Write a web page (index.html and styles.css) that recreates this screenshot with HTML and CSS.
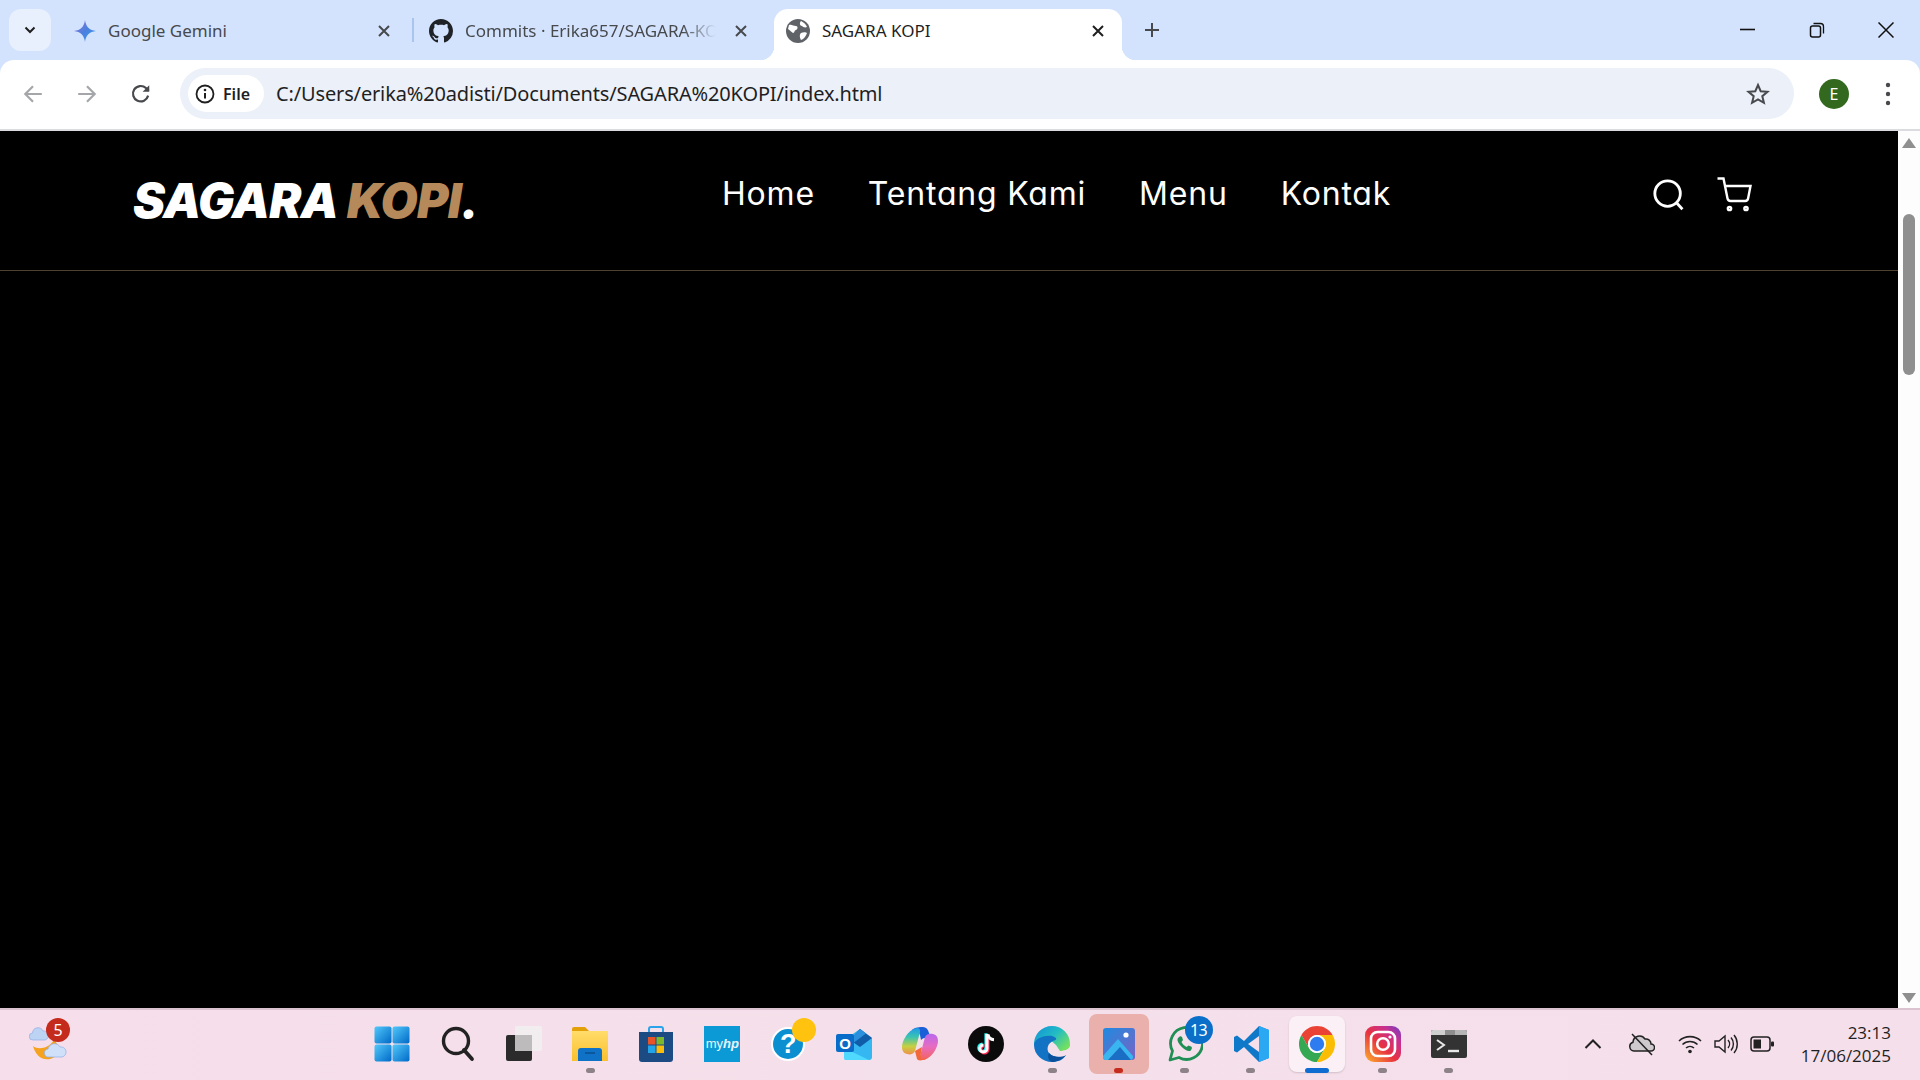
FILE: index.html
```html
<!DOCTYPE html>
<html lang="en">
<head>
    <meta charset="UTF-8">
    <title>SAGARA KOPI</title>
    <link rel="stylesheet" href="styles.css">
</head>
<body>
    <svg class="defs" width="0" height="0">
        <defs>
            <linearGradient id="gemGrad" x1="0" y1="0" x2="1" y2="1">
                <stop offset="0" stop-color="#9b72cb"/>
                <stop offset="0.5" stop-color="#4a80e0"/>
                <stop offset="1" stop-color="#3aa0e8"/>
            </linearGradient>
            <linearGradient id="winGrad" x1="0" y1="0" x2="1" y2="1">
                <stop offset="0" stop-color="#52c8fa"/>
                <stop offset="1" stop-color="#0069c8"/>
            </linearGradient>
            <linearGradient id="folderGrad" x1="0" y1="0" x2="0" y2="1">
                <stop offset="0" stop-color="#ffdc6b"/>
                <stop offset="1" stop-color="#fbc02d"/>
            </linearGradient>
            <linearGradient id="edgeGrad" x1="0" y1="0" x2="1" y2="0.7">
                <stop offset="0" stop-color="#0f8fd8"/>
                <stop offset="0.55" stop-color="#22bcc4"/>
                <stop offset="1" stop-color="#74e060"/>
            </linearGradient>
            <linearGradient id="instaGrad" x1="0" y1="1" x2="1" y2="0">
                <stop offset="0" stop-color="#fdb32b"/>
                <stop offset="0.45" stop-color="#e8323f"/>
                <stop offset="0.75" stop-color="#c9308f"/>
                <stop offset="1" stop-color="#6a3fc8"/>
            </linearGradient>
            <linearGradient id="copGrad" x1="0" y1="0" x2="0" y2="1">
                <stop offset="0" stop-color="#1e9be8"/>
                <stop offset="0.35" stop-color="#3cc4b0"/>
                <stop offset="0.7" stop-color="#c8d040"/>
                <stop offset="1" stop-color="#f09048"/>
            </linearGradient>
            <linearGradient id="copGrad2" x1="0" y1="0" x2="0" y2="1">
                <stop offset="0" stop-color="#b868ee"/>
                <stop offset="0.5" stop-color="#e86cc0"/>
                <stop offset="1" stop-color="#f4625a"/>
            </linearGradient>
            <linearGradient id="photoGrad" x1="0" y1="0" x2="1" y2="1">
                <stop offset="0" stop-color="#1f8ae0"/>
                <stop offset="1" stop-color="#7a63c4"/>
            </linearGradient>
        </defs>
    </svg>

    <div class="tabstrip">
        <button class="tab-search">
            <svg width="12" height="8" viewBox="0 0 12 8"><path d="M1.5 1.5 6 6l4.5-4.5" fill="none" stroke="#1f1f1f" stroke-width="2"/></svg>
        </button>

        <div class="tab tab-first">
            <svg class="tab-icon" viewBox="0 0 24 24"><path d="M12 1C12.7 7.5 16.5 11.3 23 12 16.5 12.7 12.7 16.5 12 23 11.3 16.5 7.5 12.7 1 12 7.5 11.3 11.3 7.5 12 1Z" fill="url(#gemGrad)"/></svg>
            <span class="tab-title">Google Gemini</span>
            <svg class="tab-close" viewBox="0 0 12 12"><path d="M1 1l10 10M11 1 1 11" stroke="#47494d" stroke-width="2"/></svg>
        </div>
        <div class="tab-sep"></div>
        <div class="tab tab-second">
            <svg class="tab-icon" viewBox="0 0 16 16"><path fill="#1f2328" d="M8 0C3.58 0 0 3.58 0 8c0 3.54 2.29 6.53 5.47 7.59.4.07.55-.17.55-.38 0-.19-.01-.82-.01-1.49-2.01.37-2.53-.49-2.69-.94-.09-.23-.48-.94-.82-1.13-.28-.15-.68-.52-.01-.53.63-.01 1.08.58 1.23.82.72 1.21 1.87.87 2.33.66.07-.52.28-.87.51-1.07-1.78-.2-3.64-.89-3.64-3.95 0-.87.31-1.59.82-2.15-.08-.2-.36-1.02.08-2.12 0 0 .67-.21 2.2.82.64-.18 1.32-.27 2-.27.68 0 1.36.09 2 .27 1.53-1.04 2.2-.82 2.2-.82.44 1.1.16 1.92.08 2.12.51.56.82 1.27.82 2.15 0 3.07-1.87 3.75-3.65 3.95.29.25.54.73.54 1.48 0 1.07-.01 1.93-.01 2.2 0 .21.15.46.55.38A8.013 8.013 0 0016 8c0-4.42-3.58-8-8-8z"/></svg>
            <span class="tab-title tab-fade">Commits · Erika657/SAGARA-KOPI</span>
            <svg class="tab-close" viewBox="0 0 12 12"><path d="M1 1l10 10M11 1 1 11" stroke="#47494d" stroke-width="2"/></svg>
        </div>
        <div class="tab tab-active">
            <svg class="tab-icon" viewBox="0 0 24 24">
                <circle cx="12" cy="12" r="12" fill="#5f6368"/>
                <path d="M3 6c3-1 4 1 7 1 2 0 2 3 0 4-2 0-1 3-3 3-2-1-3-3-5-4zM15 2c2 1 5 3 6 6-2 1-4 0-5-1-2 0-3-3-1-5zM15 14c2-1 5-1 6 0-1 3-3 6-6 7-1-2-2-5 0-7z" fill="#fff"/>
            </svg>
            <span class="tab-title tab-title-active">SAGARA KOPI</span>
            <svg class="tab-close" viewBox="0 0 12 12"><path d="M1 1l10 10M11 1 1 11" stroke="#1f1f1f" stroke-width="2"/></svg>
        </div>
        <svg class="tab-new" viewBox="0 0 16 16"><path d="M8 1v14M1 8h14" stroke="#47494d" stroke-width="2"/></svg>

        <div class="win-controls">
            <div class="win-btn"><svg width="16" height="16" viewBox="0 0 16 16"><path d="M0 7.500h15" stroke="#111" stroke-width="1.600"/></svg></div>
            <div class="win-btn"><svg width="16" height="16" viewBox="0 0 16 16"><rect x="1.500" y="4" width="10" height="11" rx="2" fill="none" stroke="#111" stroke-width="1.500"/><path d="M4.500 1.500h7a3 3 0 0 1 3 3v7" fill="none" stroke="#111" stroke-width="1.300"/></svg></div>
            <div class="win-btn"><svg width="16" height="16" viewBox="0 0 16 16"><path d="M0.500 0.500l15 15M15.500 0.500l-15 15" stroke="#111" stroke-width="1.500"/></svg></div>
        </div>
    </div>

    <div class="toolbar">
        <svg class="nav-arrow" viewBox="0 0 20 20"><path d="M18 10H3M10 3l-7 7 7 7" fill="none" stroke="#a4a6a9" stroke-width="2"/></svg>
        <svg class="nav-arrow" viewBox="0 0 20 20"><path d="M2 10h15M10 3l7 7-7 7" fill="none" stroke="#a4a6a9" stroke-width="2"/></svg>
        <svg class="nav-arrow" viewBox="0 0 20 20"><path d="M16.500 11.500A7 7 0 1 1 14.500 4.600L17 7" fill="none" stroke="#47494d" stroke-width="2"/><path d="M17.500 2v6h-6z" fill="#47494d"/></svg>

        <div class="omnibox">
            <div class="chip">
                <svg width="20" height="20" viewBox="0 0 20 20"><circle cx="10" cy="10" r="8.500" fill="none" stroke="#1f1f1f" stroke-width="1.800"/><path d="M10 9v5.500" stroke="#1f1f1f" stroke-width="2"/><circle cx="10" cy="6" r="1.300" fill="#1f1f1f"/></svg>
                <span class="chip-label">File</span>
            </div>
            <span class="url">C:/Users/erika%20adisti/Documents/SAGARA%20KOPI/index.html</span>
            <svg class="star" width="24" height="24" viewBox="0 0 24 24"><path d="M12 3l2.700 6.200 6.800.6-5.200 4.400 1.600 6.600L12 17.300l-5.900 3.500 1.600-6.600L2.500 9.800l6.800-.6z" fill="none" stroke="#47494d" stroke-width="2"/></svg>
        </div>

        <div class="avatar">E</div>
        <svg class="kebab" width="6" height="24" viewBox="0 0 6 24"><circle cx="3" cy="3" r="2.200" fill="#47494d"/><circle cx="3" cy="12" r="2.200" fill="#47494d"/><circle cx="3" cy="21" r="2.200" fill="#47494d"/></svg>
    </div>

    <div class="viewport">
        <main class="page">
            <header class="site-header">
                <div class="logo">SAGARA <span class="logo-accent">KOPI</span>.</div>
                <nav class="site-nav">
                    <a href="#">Home</a>
                    <a href="#">Tentang Kami</a>
                    <a href="#">Menu</a>
                    <a href="#">Kontak</a>
                </nav>
                <div class="site-icons">
                    <svg class="icon-search" viewBox="0 0 24 24"><circle cx="11" cy="11" r="9" fill="none" stroke="#fff" stroke-width="2"/><path d="M21.500 22l-4.200-4.500" stroke="#fff" stroke-width="2"/></svg>
                    <svg class="icon-cart" viewBox="0 0 24 24"><circle cx="9" cy="21" r="1.100" fill="none" stroke="#fff" stroke-width="1.600"/><circle cx="20" cy="21" r="1.100" fill="none" stroke="#fff" stroke-width="1.600"/><path d="M1 1h4l2.680 13.390a2 2 0 0 0 2 1.610h9.720a2 2 0 0 0 2-1.610L23 6H6" fill="none" stroke="#fff" stroke-width="1.600"/></svg>
                </div>
            </header>
        </main>
        <div class="scrollbar">
            <div class="arrow-up"></div>
            <div class="thumb"></div>
            <div class="arrow-down"></div>
        </div>
    </div>

    <footer class="taskbar">
        <div class="weather">
            <svg width="38" height="36" viewBox="0 0 38 36">
                <path d="M4 20C9 24 19 23 25 14 31 19 31 31 21 33 12 35 6 28 4 20Z" fill="#f5a21e"/>
                <path d="M4 14a3.500 3.500 0 0 1-.5-7A5.500 5.500 0 0 1 14 5a4.500 4.500 0 0 1 2 9z" fill="#bcd3f3" stroke="#8fb0e6" stroke-width=".7"/>
                <path d="M20 31a4 4 0 0 1-1-8A6.500 6.500 0 0 1 31 21a5 5 0 0 1 2 10z" fill="#cfe0f8" stroke="#8fb0e6" stroke-width=".7"/>
            </svg>
            <span class="badge badge-red">5</span>
        </div>

        <div class="apps">
            <div class="app">
                <svg width="36" height="36" viewBox="0 0 36 36"><rect x="0.500" y="0.500" width="17" height="17" rx="2" fill="url(#winGrad)"/><rect x="18.500" y="0.500" width="17" height="17" rx="2" fill="url(#winGrad)"/><rect x="0.500" y="18.500" width="17" height="17" rx="2" fill="url(#winGrad)"/><rect x="18.500" y="18.500" width="17" height="17" rx="2" fill="url(#winGrad)"/></svg>
            </div>
            <div class="app">
                <svg width="34" height="36" viewBox="0 0 34 36"><circle cx="15" cy="15" r="12.500" fill="none" stroke="#222" stroke-width="3.400"/><path d="M23 24l8 9" stroke="#222" stroke-width="3.800" stroke-linecap="round"/></svg>
            </div>
            <div class="app">
                <svg width="36" height="36" viewBox="0 0 36 36"><rect x="0" y="9" width="26" height="26" rx="2" fill="#2b2b2b"/><rect x="9" y="0" width="27" height="25" rx="2" fill="#f2eef0"/><rect x="9" y="9" width="17" height="16" fill="#bdbbbc"/></svg>
            </div>
            <div class="app">
                <svg width="38" height="36" viewBox="0 0 38 36"><path d="M1 3a2 2 0 0 1 2-2h11l4 4h18a1 1 0 0 1 1 1v29H1z" fill="#e3a008"/><rect x="1" y="5" width="36" height="30" fill="url(#folderGrad)"/><path d="M7 35V25a3 3 0 0 1 3-3h18a3 3 0 0 1 3 3v10z" fill="#0f72c6"/><path d="M14 27h10" stroke="#0a4f90" stroke-width="1.500"/></svg>
                <span class="dot"></span>
            </div>
            <div class="app">
                <svg width="36" height="38" viewBox="0 0 36 38"><path d="M11 7V4a2 2 0 0 1 2-2h10a2 2 0 0 1 2 2v3" fill="none" stroke="#2aa4ea" stroke-width="2"/><path d="M1 7h34v27a3 3 0 0 1-3 3H4a3 3 0 0 1-3-3z" fill="#1c4a82"/><rect x="10" y="12" width="7.500" height="7.500" fill="#e8532a"/><rect x="18.500" y="12" width="7.500" height="7.500" fill="#7cb72c"/><rect x="10" y="20.500" width="7.500" height="7.500" fill="#22a4e8"/><rect x="18.500" y="20.500" width="7.500" height="7.500" fill="#fbbc0a"/></svg>
            </div>
            <div class="app">
                <div class="myhp">my<b>hp</b></div>
            </div>
            <div class="app">
                <div class="help">?</div>
                <span class="help-dot"></span>
            </div>
            <div class="app">
                <svg width="36" height="32" viewBox="0 0 36 32"><path d="M8 12 24 1l12 9v19a3 3 0 0 1-3 3H9z" fill="#35b8f1"/><path d="M24 1l12 9-12 9-10-7z" fill="#0f5ca8"/><path d="M24 1l6 4.500-12 9-4-2.500z" fill="#2a8fdc"/><path d="M8 20l25 12H9a2 2 0 0 1-1-2z" fill="#50d9ff"/><rect x="0" y="6" width="18" height="18" rx="2" fill="#0a6cc9"/><text class="outlook-o" x="9" y="20.500">O</text></svg>
            </div>
            <div class="app">
                <svg width="36" height="34" viewBox="0 0 36 34">
                    <path d="M10 3C12 1 15 0 21 0 24 0 26 2 27 6L29 13C26 10 22 10 19 13L18 8C17 5 15 3 10 3Z" fill="#1a5fd8"/>
                    <path d="M10 3C14 0 19 0 18 5L13 24C12 27 8 28 5 27 1 26 0 23 0 20 0 14 5 6 10 3Z" fill="url(#copGrad)"/>
                    <path d="M26 31C22 34 17 34 18 29L23 10C24 7 28 6 31 7 35 8 36 11 36 14 36 20 31 28 26 31Z" fill="url(#copGrad2)"/>
                    <path d="M13 24 15 32C16 34 20 34 26 31 20 33 18 31 19 26L20 20 13 24Z" fill="#f2683c"/>
                </svg>
            </div>
            <div class="app">
                <svg width="36" height="36" viewBox="0 0 36 36"><circle cx="18" cy="18" r="18" fill="#0b0b0b"/><path d="M19 8v14.500a3.600 3.600 0 1 1-3.600-3.600" fill="none" stroke="#25f4ee" stroke-width="3.200" transform="translate(-1 -.8)"/><path d="M19 8v14.500a3.600 3.600 0 1 1-3.600-3.600" fill="none" stroke="#fe2c55" stroke-width="3.200" transform="translate(1 .8)"/><path d="M19 8v14.500a3.600 3.600 0 1 1-3.600-3.600" fill="none" stroke="#fff" stroke-width="3"/><path d="M20 8.500c.5 3 3 5 6 5.200" fill="none" stroke="#fff" stroke-width="3"/></svg>
            </div>
            <div class="app">
                <svg width="36" height="36" viewBox="0 0 36 36">
                    <path d="M18 0A18 18 0 0 1 36 18V20C35 24 30 25 26 25L22 19 14 12 0 19A18 18 0 0 1 18 0Z" fill="url(#edgeGrad)"/>
                    <path d="M18 10C8 9 0 14 0 19 0 29 9 36 18 36 24 36 29 34 32 29 26 32 18 31 15 27 12 23 14 17 19 15 23 14 24 12 18 10Z" fill="#1272c4"/>
                    <path d="M15 27C18 31 26 32 32 29 28 34 22 36 18 36 15 35 13 31 15 27Z" fill="#0c4f9a"/>
                    <path d="M36 20C35 24 30 25 26 25 22 25 19.500 23 20.500 20.500 15 22 14 27 18 29 24 31 29 31 32 29 34 27 35.500 24 36 20Z" fill="#f4e0ea"/>
                </svg>
                <span class="dot"></span>
            </div>
            <div class="app app-photos">
                <svg width="32" height="32" viewBox="0 0 32 32"><rect width="32" height="32" rx="3" fill="url(#photoGrad)"/><circle cx="23" cy="7" r="2.600" fill="#fff"/><path d="M0 28 15 11l15 17v1a3 3 0 0 1-3 3H3a3 3 0 0 1-3-3z" fill="#39b6f0"/><path d="M5 32 17 19l11 13z" fill="#1a6fc4"/></svg>
                <span class="dot dot-red"></span>
            </div>
            <div class="app">
                <svg width="36" height="36" viewBox="0 0 36 36"><path d="M3 34l2.500-9A16 16 0 1 1 12 31.500z" fill="none" stroke="#1f8f55" stroke-width="2.800" stroke-linejoin="round"/><path d="M12 11c1-1 2-1 3 0l1 3-1.500 2c1 2 3 4 5 5l2-1.500 3 1.200c1 1 0 3-1 4-4 2-14-7-13-12z" fill="#1f8f55"/></svg>
                <span class="badge badge-blue">13</span>
                <span class="dot"></span>
            </div>
            <div class="app">
                <svg width="36" height="36" viewBox="0 0 36 36"><path d="M26 0 11 15 4 9.500 1 11v14l3 1.500L11 21l15 15 10-4V4z" fill="#0f78c9"/><path d="M26 0l10 4v28l-10 4z" fill="#2aa8f2"/><path d="M26 10 15 18l11 8z" fill="#f4dfea"/></svg>
                <span class="dot"></span>
            </div>
            <div class="app app-chrome">
                <svg width="36" height="36" viewBox="4 4 40 40">
                    <path d="M6.680 14A20 20 0 0 1 41.320 14H24a10 10 0 0 0-8.660 15z" fill="#ea4335"/>
                    <path d="M6.680 14A20 20 0 0 0 24 44L32.660 29A10 10 0 0 1 15.340 29z" fill="#34a853"/>
                    <path d="M41.320 14H24A10 10 0 0 1 32.660 29L24 44A20 20 0 0 0 41.320 14z" fill="#fbbc04"/>
                    <circle cx="24" cy="24" r="10" fill="#fff"/>
                    <circle cx="24" cy="24" r="8" fill="#2f7cf0"/>
                </svg>
                <span class="bar-blue"></span>
            </div>
            <div class="app">
                <svg width="36" height="36" viewBox="0 0 36 36"><rect width="36" height="36" rx="9" fill="url(#instaGrad)"/><rect x="6" y="6" width="24" height="24" rx="6.500" fill="none" stroke="#fff" stroke-width="2.600"/><circle cx="18" cy="18" r="5.800" fill="none" stroke="#fff" stroke-width="2.600"/><circle cx="25" cy="11" r="1.600" fill="#fff"/></svg>
                <span class="dot"></span>
            </div>
            <div class="app">
                <svg width="36" height="28" viewBox="0 0 36 28"><rect width="36" height="28" rx="2" fill="#333"/><path d="M0 2a2 2 0 0 1 2-2h12v5H0z" fill="#cfcfcf"/><rect x="14" width="10" height="5" fill="#8e8e8e"/><path d="M24 0h10a2 2 0 0 1 2 2v3H24z" fill="#b5b5b5"/><path d="M6 10l7 5-7 5" fill="none" stroke="#e8e8e8" stroke-width="2"/><path d="M17 21h11" stroke="#e8e8e8" stroke-width="2.400"/></svg>
                <span class="dot"></span>
            </div>
        </div>

        <div class="tray">
            <svg width="18" height="12" viewBox="0 0 18 12"><path d="M1.500 10 9 2.500 16.500 10" fill="none" stroke="#222" stroke-width="2"/></svg>
            <svg class="tray-cloud" width="26" height="24" viewBox="0 0 26 24"><path d="M5 19a4.500 4.500 0 0 1-1-8.800A6.500 6.500 0 0 1 16 7a5 5 0 0 1 6 5 3.500 3.500 0 0 1 0 7z" fill="#cfc8cc" stroke="#222" stroke-width="1.500"/><path d="M3 2l20 21" stroke="#222" stroke-width="1.500"/></svg>
            <svg class="tray-wifi" width="24" height="20" viewBox="0 0 24 20"><path d="M1 7a16 16 0 0 1 22 0M4.500 10.500a11 11 0 0 1 15 0M8 14a6 6 0 0 1 8 0" fill="none" stroke="#222" stroke-width="1.600"/><circle cx="12" cy="17.500" r="1.800" fill="#222"/></svg>
            <svg class="tray-volume" width="24" height="20" viewBox="0 0 24 20"><path d="M1 7v6h4l6 5V2L5 7z" fill="none" stroke="#222" stroke-width="1.400"/><path d="M14 6a6 6 0 0 1 0 8M17 3.500a10 10 0 0 1 0 13M20 1a14 14 0 0 1 0 18" fill="none" stroke="#222" stroke-width="1.400"/></svg>
            <svg class="tray-battery" width="24" height="16" viewBox="0 0 24 16"><rect x="1" y="1" width="19" height="14" rx="3" fill="none" stroke="#222" stroke-width="1.500"/><rect x="3.500" y="3.500" width="7.500" height="9" fill="#222"/><rect x="21" y="5.500" width="3" height="5" rx="1" fill="#222"/></svg>
            <div class="clock">
                <div>23:13</div>
                <div>17/06/2025</div>
            </div>
        </div>
    </footer>
</body>
</html>
```

FILE: styles.css
```css
* {
    box-sizing: border-box;
}

html, body {
    margin: 0;
    height: 100%;
    overflow: hidden;
}

body {
    display: flex;
    flex-direction: column;
    height: 1080px;
    background-color: #d3e3fd;
    font-family: "Noto Sans", "Open Sans", sans-serif;
    color: #1f1f1f;
}

.defs {
    display: block;
    height: 0;
}

/* browser tabs */
.tabstrip {
    display: flex;
    align-items: flex-end;
    height: 60px;
    padding-left: 9px;
    flex-shrink: 0;
}

.tab-search {
    display: flex;
    align-items: center;
    justify-content: center;
    width: 42px;
    height: 42px;
    margin-bottom: 9px;
    margin-right: 12px;
    padding: 0;
    border: 0;
    border-radius: 12px;
    background-color: #e9f0fd;
}

.tab {
    display: flex;
    align-items: center;
    height: 51px;
    padding-bottom: 8px;
    font-size: 17px;
    color: #47494d;
}

.tab-first {
    width: 349px;
    padding-left: 10px;
    padding-right: 18px;
}

.tab-sep {
    width: 2px;
    height: 24px;
    margin-bottom: 18px;
    background-color: #a9c4ee;
}

.tab-second {
    width: 354px;
    padding-left: 15px;
    padding-right: 17px;
}

.tab-active {
    position: relative;
    width: 348px;
    margin-left: 6px;
    padding-left: 12px;
    padding-right: 14px;
    border-radius: 14px 14px 0 0;
    background-color: #fff;
    color: #1f1f1f;
}

.tab-active::before,
.tab-active::after {
    content: "";
    position: absolute;
    bottom: 0;
    width: 14px;
    height: 14px;
}

.tab-active::before {
    left: -14px;
    background: radial-gradient(circle at 0 0, #d3e3fd 14px, #fff 14.5px);
}

.tab-active::after {
    right: -14px;
    background: radial-gradient(circle at 100% 0, #d3e3fd 14px, #fff 14.5px);
}

.tab-icon {
    width: 24px;
    height: 24px;
    margin-right: 12px;
    flex-shrink: 0;
}

.tab-first .tab-icon {
    margin-right: 11px;
}

.tab-title {
    flex: 1;
    overflow: hidden;
    white-space: nowrap;
}

.tab-fade {
    -webkit-mask-image: linear-gradient(to right, #000 85%, transparent 98%);
    mask-image: linear-gradient(to right, #000 85%, transparent 98%);
}

.tab-close {
    width: 12px;
    height: 12px;
    margin-left: 14px;
    margin-right: 4px;
    flex-shrink: 0;
}

.tab-new {
    width: 16px;
    height: 16px;
    margin-left: 22px;
    margin-bottom: 22px;
}

.win-controls {
    display: flex;
    margin-left: auto;
    height: 60px;
}

.win-btn {
    display: flex;
    align-items: center;
    justify-content: center;
    width: 69px;
    height: 60px;
}

/* address bar */
.toolbar {
    display: flex;
    align-items: center;
    height: 71px;
    flex-shrink: 0;
    padding: 0 0 2px 0;
    border-radius: 14px 14px 0 0;
    border-bottom: 2px solid #dadce0;
    background-color: #fff;
}

.nav-arrow {
    width: 22px;
    height: 22px;
    margin-left: 22px;
    margin-right: 10px;
}

.omnibox {
    display: flex;
    align-items: center;
    width: 1614px;
    height: 51px;
    margin-left: 18px;
    padding-left: 8px;
    padding-right: 24px;
    border-radius: 26px;
    background-color: #ebf0f9;
}

.chip {
    display: flex;
    align-items: center;
    gap: 8px;
    height: 37px;
    padding: 0 14px 0 7px;
    border-radius: 19px;
    background-color: #fff;
}

.chip-label {
    font-size: 16px;
    font-weight: 600;
}

.url {
    margin-left: 12px;
    font-size: 20px;
    letter-spacing: -0.15px;
    white-space: nowrap;
}

.star {
    margin-left: auto;
}

.avatar {
    display: flex;
    align-items: center;
    justify-content: center;
    width: 30px;
    height: 30px;
    margin-left: 25px;
    border-radius: 50%;
    background-color: #33691e;
    color: #fff;
    font-size: 16px;
}

.kebab {
    margin-left: 36px;
}

/* the site */
.viewport {
    display: flex;
    height: 877px;
    flex-shrink: 0;
}

.page {
    flex: 1;
    background-color: #000;
}

.site-header {
    display: flex;
    align-items: center;
    height: 140px;
    padding-left: 133px;
    padding-right: 146px;
    border-bottom: 1px solid #4f4130;
    font-family: Inter, "Noto Sans", sans-serif;
}

.logo {
    width: 589px;
    color: #fff;
    font-size: 48px;
    font-weight: 900;
    font-style: italic;
    white-space: nowrap;
    letter-spacing: -0.7px;
}

.logo-accent {
    color: #b6895b;
}

.site-nav {
    display: flex;
    gap: 53px;
    margin-top: -14px;
}

.site-nav a {
    color: #fff;
    font-size: 32px;
    font-weight: 400;
    font-feature-settings: "cv11";
    letter-spacing: 0.8px;
    text-decoration: none;
    white-space: nowrap;
}

.site-icons {
    display: flex;
    align-items: center;
    margin-left: auto;
    gap: 30px;
    margin-top: -11px;
}

.icon-search {
    width: 34px;
    height: 34px;
}

.icon-cart {
    width: 36px;
    height: 36px;
}

.scrollbar {
    position: relative;
    width: 22px;
    background-color: #fdfdfd;
}

.thumb {
    position: absolute;
    top: 83px;
    left: 5px;
    width: 12px;
    height: 161px;
    border-radius: 6px;
    background-color: #8f8f8f;
}

.arrow-up,
.arrow-down {
    position: absolute;
    left: 4px;
    width: 0;
    height: 0;
    border-left: 7px solid transparent;
    border-right: 7px solid transparent;
}

.arrow-up {
    top: 7px;
    border-bottom: 10px solid #8f8f8f;
}

.arrow-down {
    bottom: 5px;
    border-top: 10px solid #8f8f8f;
}

/* windows taskbar */
.taskbar {
    display: flex;
    flex: 1;
    align-items: stretch;
    padding-bottom: 2px;
    border-top: 2px solid #dcc3d0;
    background: linear-gradient(to right, #f6deeb, #f4e0ea 50%, #f5dfeb);
}

.weather {
    position: relative;
    display: flex;
    align-items: center;
    width: 359px;
    padding-left: 29px;
}

.apps {
    display: flex;
    width: 1124px;
}

.app {
    position: relative;
    display: flex;
    align-items: center;
    justify-content: center;
    width: 66.06px;
    flex-shrink: 0;
    padding-bottom: 1px;
}

.app-photos::before,
.app-chrome::before {
    content: "";
    position: absolute;
    top: 4px;
    bottom: 4px;
    left: 3px;
    right: 3px;
    border-radius: 8px;
    background-color: #e9b0ac;
    z-index: 0;
}

.app-chrome::before {
    top: 6px;
    bottom: 6px;
    left: 5px;
    right: 5px;
    background-color: #fbf0f5;
    box-shadow: 0 1px 2px rgba(0, 0, 0, 0.15);
}

.app svg,
.app div {
    position: relative;
    z-index: 1;
}

.dot,
.bar-blue {
    position: absolute;
    bottom: 5px;
    left: 50%;
    z-index: 1;
    height: 5px;
    border-radius: 3px;
    background-color: #8c8288;
}

.dot {
    width: 9px;
    margin-left: -4.5px;
}

.dot-red {
    background-color: #c42b1c;
}

.bar-blue {
    width: 24px;
    margin-left: -12px;
    background-color: #0f6cd0;
}

.badge {
    position: absolute;
    display: flex;
    align-items: center;
    justify-content: center;
    border-radius: 50%;
    color: #fff;
}

.badge-red {
    top: 8px;
    left: 46px;
    width: 24px;
    height: 24px;
    background-color: #c42b1c;
    font-size: 16px;
}

.badge-blue {
    top: 6px;
    left: 33px;
    z-index: 2;
    width: 28px;
    height: 28px;
    background-color: #0a6fc9;
    font-size: 16px;
    letter-spacing: -0.5px;
}

.myhp {
    width: 36px;
    height: 36px;
    background-color: #0c9ad6;
    color: #e8f6fc;
    font-family: "Liberation Sans", sans-serif;
    font-size: 13px;
    line-height: 36px;
    text-align: center;
}

.myhp b {
    font-style: italic;
}

.help {
    width: 34px;
    height: 34px;
    border: 2px solid #fff;
    border-radius: 50%;
    background-color: #0c8fd0;
    color: #fff;
    font-family: "Liberation Sans", sans-serif;
    font-size: 27px;
    font-weight: 700;
    line-height: 30px;
    text-align: center;
}

.help-dot {
    position: absolute;
    top: 8px;
    left: 37px;
    z-index: 2;
    width: 24px;
    height: 24px;
    border-radius: 50%;
    background-color: #ffc20e;
}

.outlook-o {
    fill: #fff;
    font-family: "Liberation Sans", sans-serif;
    font-size: 15px;
    font-weight: 700;
    text-anchor: middle;
}

.tray {
    display: flex;
    align-items: center;
    flex: 1;
    padding-left: 101px;
}

.tray-cloud {
    margin-left: 27px;
}

.tray-wifi {
    margin-left: 23px;
}

.tray-volume {
    margin-left: 12px;
}

.tray-battery {
    margin-left: 12px;
}

.clock {
    width: 110px;
    margin-left: 7px;
    font-family: "Open Sans", sans-serif;
    font-size: 17px;
    line-height: 23px;
    text-align: right;
    color: #1f1f1f;
}
```
